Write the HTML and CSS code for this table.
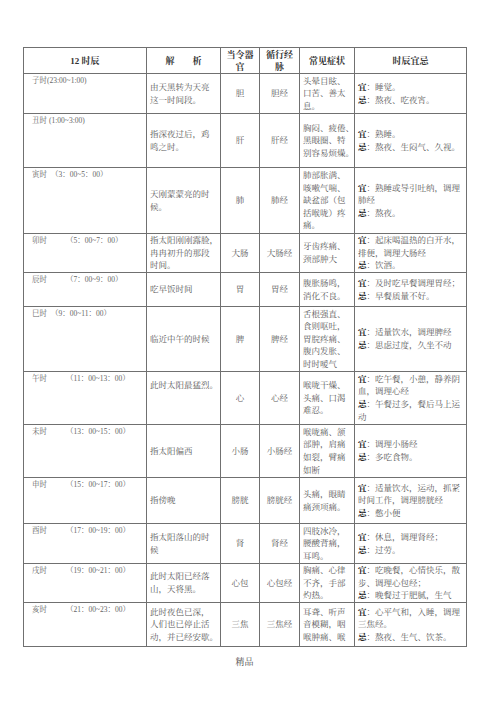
FILE: index.html
```html
<!DOCTYPE html>
<html lang="zh-CN">
<head>
<meta charset="utf-8">
<title>12时辰</title>
<link rel="stylesheet" href="styles.css">
</head>
<body>
<div class="page">
<table class="tbl">
<colgroup>
<col class="c1"><col class="c2"><col class="c3"><col class="c4"><col class="c5"><col class="c6">
</colgroup>
<thead>
<tr class="rh">
<th>12 时辰</th>
<th>解&emsp;&emsp;析</th>
<th>当令器官</th>
<th>循行经脉</th>
<th>常见症状</th>
<th>时辰宜忌</th>
</tr>
</thead>
<tbody>
<tr class="r1">
<td class="zh"><span>子时</span><span>(23:00~1:00)</span></td>
<td class="ex">由天黑转为天亮<br>这一时间段。</td>
<td class="og">胆</td>
<td class="og">胆经</td>
<td class="sy">头晕目眩、<br>口苦、善太<br>息。</td>
<td class="yj"><b>宜</b>：睡觉。<br><b>忌</b>：熬夜、吃夜宵。</td>
</tr>
<tr class="r2">
<td class="zh"><span>丑时</span><span class="g1">(1:00~3:00)</span></td>
<td class="ex">指深夜过后，鸡<br>鸣之时。</td>
<td class="og">肝</td>
<td class="og">肝经</td>
<td class="sy">胸闷、疲倦、<br>黑眼圈、特<br>别容易烦燥。</td>
<td class="yj"><b>宜</b>：熟睡。<br><b>忌</b>：熬夜、生闷气、久视。</td>
</tr>
<tr class="r3">
<td class="zh"><span>寅时</span><span class="g2">（3：00~5：00）</span></td>
<td class="ex">天刚蒙蒙亮的时<br>候。</td>
<td class="og">肺</td>
<td class="og">肺经</td>
<td class="sy">肺部胀满、<br>咳嗽气喘、<br>缺盆部（包<br>括喉咙）疼<br>痛。</td>
<td class="yj"><b>宜</b>：熟睡或导引吐纳，调理<br>肺经<br><b>忌</b>：熬夜。</td>
</tr>
<tr class="r4">
<td class="zh"><span>卯时</span><span class="g3">（5：00~7：00）</span></td>
<td class="ex">指太阳刚刚露脸，<br>冉冉初升的那段<br>时间。</td>
<td class="og">大肠</td>
<td class="og">大肠经</td>
<td class="sy">牙齿疼痛、<br>颈部肿大</td>
<td class="yj"><b>宜</b>：起床喝温热的白开水，<br>排便，调理大肠经<br><b>忌</b>：饮酒。</td>
</tr>
<tr class="r5">
<td class="zh"><span>辰时</span><span class="g3">（7：00~9：00）</span></td>
<td class="ex">吃早饭时间</td>
<td class="og">胃</td>
<td class="og">胃经</td>
<td class="sy">腹胀肠鸣，<br>消化不良。</td>
<td class="yj"><b>宜</b>：及时吃早餐调理胃经；<br><b>忌</b>：早餐质量不好。</td>
</tr>
<tr class="r6">
<td class="zh"><span>巳时</span><span class="g2">（9：00~11：00）</span></td>
<td class="ex">临近中午的时候</td>
<td class="og">脾</td>
<td class="og">脾经</td>
<td class="sy">舌根强直、<br>食则呕吐，<br>胃脘疼痛、<br>腹内发胀、<br>时时嗳气</td>
<td class="yj"><b>宜</b>：适量饮水，调理脾经<br><b>忌</b>：思虑过度，久坐不动</td>
</tr>
<tr class="r7">
<td class="zh"><span>午时</span><span class="g3">（11：00~13：00）</span></td>
<td class="ex hi">此时太阳最猛烈。</td>
<td class="og">心</td>
<td class="og">心经</td>
<td class="sy">喉咙干燥、<br>头痛、口渴<br>难忍。</td>
<td class="yj"><b>宜</b>：吃午餐，小憩，静养阴<br>血，调理心经<br><b>忌</b>：午餐过多，餐后马上运<br>动</td>
</tr>
<tr class="r8">
<td class="zh"><span>未时</span><span class="g3">（13：00~15：00）</span></td>
<td class="ex">指太阳偏西</td>
<td class="og">小肠</td>
<td class="og">小肠经</td>
<td class="sy">喉咙痛、颔<br>部肿，肩痛<br>如裂，臂痛<br>如断</td>
<td class="yj"><b>宜</b>：调理小肠经<br><b>忌</b>：多吃食物。</td>
</tr>
<tr class="r9">
<td class="zh"><span>申时</span><span class="g3">（15：00~17：00）</span></td>
<td class="ex">指傍晚</td>
<td class="og">膀胱</td>
<td class="og">膀胱经</td>
<td class="sy">头痛，眼睛<br>痛颈项痛。</td>
<td class="yj"><b>宜</b>：适量饮水，运动，抓紧<br>时间工作，调理膀胱经<br><b>忌</b>：憋小便</td>
</tr>
<tr class="r10">
<td class="zh"><span>酉时</span><span class="g3">（17：00~19：00）</span></td>
<td class="ex">指太阳落山的时<br>候</td>
<td class="og">肾</td>
<td class="og">肾经</td>
<td class="sy">四肢冰冷，<br>腰酸背痛，<br>耳鸣。</td>
<td class="yj"><b>宜</b>：休息，调理肾经；<br><b>忌</b>：过劳。</td>
</tr>
<tr class="r11">
<td class="zh"><span>戌时</span><span class="g3">（19：00~21：00）</span></td>
<td class="ex">此时太阳已经落<br>山，天将黑。</td>
<td class="og">心包</td>
<td class="og">心包经</td>
<td class="sy">胸痛、心律<br>不齐，手部<br>灼热。</td>
<td class="yj"><b>宜</b>：吃晚餐，心情快乐，散<br>步、调理心包经；<br><b>忌</b>：晚餐过于肥腻，生气</td>
</tr>
<tr class="r12">
<td class="zh"><span>亥时</span><span class="g3">（21：00~23：00）</span></td>
<td class="ex">此时夜色已深，<br>人们也已停止活<br>动，并已经安歇。</td>
<td class="og">三焦</td>
<td class="og">三焦经</td>
<td class="sy">耳聋、听声<br>音模糊，咽<br>喉肿痛、喉</td>
<td class="yj"><b>宜</b>：心平气和，入睡，调理<br>三焦经。<br><b>忌</b>：熬夜、生气、饮茶。</td>
</tr>
</tbody>
</table>
<div class="foot">精品</div>
</div>
</body>
</html>
```

FILE: styles.css
```css
html, body {
  margin: 0;
  padding: 0;
  background: #ffffff;
}

body {
  font-family: "Liberation Serif", "Noto Serif CJK SC", "Noto Sans CJK SC", serif;
  color: #5a5a5a;
}

.page {
  width: 500px;
  height: 708px;
  padding: 47px 0 0 23px;
  box-sizing: border-box;
}

.tbl {
  border-collapse: collapse;
  table-layout: fixed;
  width: 443px;
}

.c1 { width: 123px; }
.c2 { width: 74px; }
.c3 { width: 39px; }
.c4 { width: 40px; }
.c5 { width: 55px; }
.c6 { width: 112px; }

.tbl th,
.tbl td {
  border: 1px solid #707070;
  padding: 0 3px;
  font-size: 8.5px;
  line-height: 12.6px;
  overflow: hidden;
}

.tbl th {
  font-weight: bold;
  font-size: 9px;
  line-height: 12px;
  color: #333333;
  text-align: center;
  vertical-align: middle;
}

.rh { height: 26px; }
.r1 { height: 40px; }
.r2 { height: 54px; }
.r3 { height: 66px; }
.r4 { height: 39px; }
.r5 { height: 34px; }
.r6 { height: 65px; }
.r7 { height: 53px; }
.r8 { height: 53px; }
.r9 { height: 46px; }
.r10 { height: 40px; }
.r11 { height: 39px; }
.r12 { height: 44px; }

.tbl td.zh {
  vertical-align: top;
  font-size: 7.5px;
  line-height: 10px;
  padding: 2px 4px 0 8px;
  white-space: nowrap;
  color: #666666;
}

.g1 { margin-left: 2px; }
.g2 { margin-left: 4px; }
.g3 { margin-left: 19px; }

.ex {
  vertical-align: middle;
  text-align: left;
  white-space: nowrap;
}

.ex.hi {
  vertical-align: top;
  padding-top: 7px;
}

.og {
  vertical-align: middle;
  text-align: center;
}

.sy {
  vertical-align: middle;
  text-align: left;
  white-space: nowrap;
}

.yj {
  vertical-align: middle;
  text-align: left;
  white-space: nowrap;
}

.yj b {
  color: #222222;
  font-weight: bold;
}

.foot {
  width: 443px;
  text-align: center;
  font-size: 9px;
  color: #555555;
  margin-top: 8px;
}
```
